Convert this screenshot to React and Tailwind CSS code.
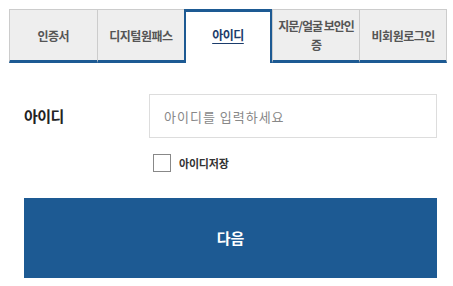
import React from "react";

const tabs = ["인증서", "디지털원패스", "아이디", "지문/얼굴 보안인증", "비회원로그인"];

export default function App() {
  return (
    <div
      className="w-[453px] h-[286px] bg-white overflow-hidden"
      style={{ fontFamily: '"Noto Sans CJK KR", "Noto Sans", sans-serif' }}
    >
      <div className="pl-[9px] pr-[6px] pt-[9px]">
        <div className="grid grid-cols-5">
          {tabs.map((t, i) =>
            i === 2 ? (
              <div
                key={t}
                className="h-[54px] box-border bg-white border-t-[3px] border-x-2 border-b-0 border-[#1d5a93] flex items-center justify-center pb-[5px]"
              >
                <span className="text-[12px] font-bold tracking-[-0.5px] text-[#1b3c6b] underline underline-offset-[3px]">
                  {t}
                </span>
              </div>
            ) : (
              <div
                key={t}
                className={
                  "h-[54px] box-border bg-[#eeeeee] border-t border-l border-[#cccccc] border-b-[3px] border-b-[#1d5a93] flex items-center justify-center px-[2px] text-center" +
                  (i === 4 ? " border-r" : "")
                }
              >
                <span
                  className={
                    "text-[12px] leading-[19px] font-bold text-[#555555] " +
                    (i === 3 ? "tracking-[-1px]" : "tracking-[-0.5px]")
                  }
                >
                  {t}
                </span>
              </div>
            )
          )}
        </div>
      </div>

      <div className="pl-[24px] pr-[16px] pt-[31px]">
        <div className="flex items-center">
          <div className="w-[125px] text-[15px] font-bold tracking-[-0.5px] text-[#222222]">
            아이디
          </div>
          <input
            type="text"
            placeholder="아이디를 입력하세요"
            className="flex-1 h-[44px] box-border border border-[#dddddd] pl-[14px] text-[13px] tracking-[1px] text-[#333] placeholder:text-[#888888] outline-none"
          />
        </div>
        <div className="flex items-center mt-[16px] ml-[129px] gap-[8px]">
          <span className="w-[18px] h-[18px] box-border border border-[#888888] bg-white"></span>
          <span className="text-[11px] font-bold tracking-[-0.2px] text-[#333333]">
            아이디저장
          </span>
        </div>
        <button className="mt-[26px] w-full h-[80px] bg-[#1d5a93] text-white text-[15px] font-bold flex items-center justify-center">
          다음
        </button>
      </div>
    </div>
  );
}
